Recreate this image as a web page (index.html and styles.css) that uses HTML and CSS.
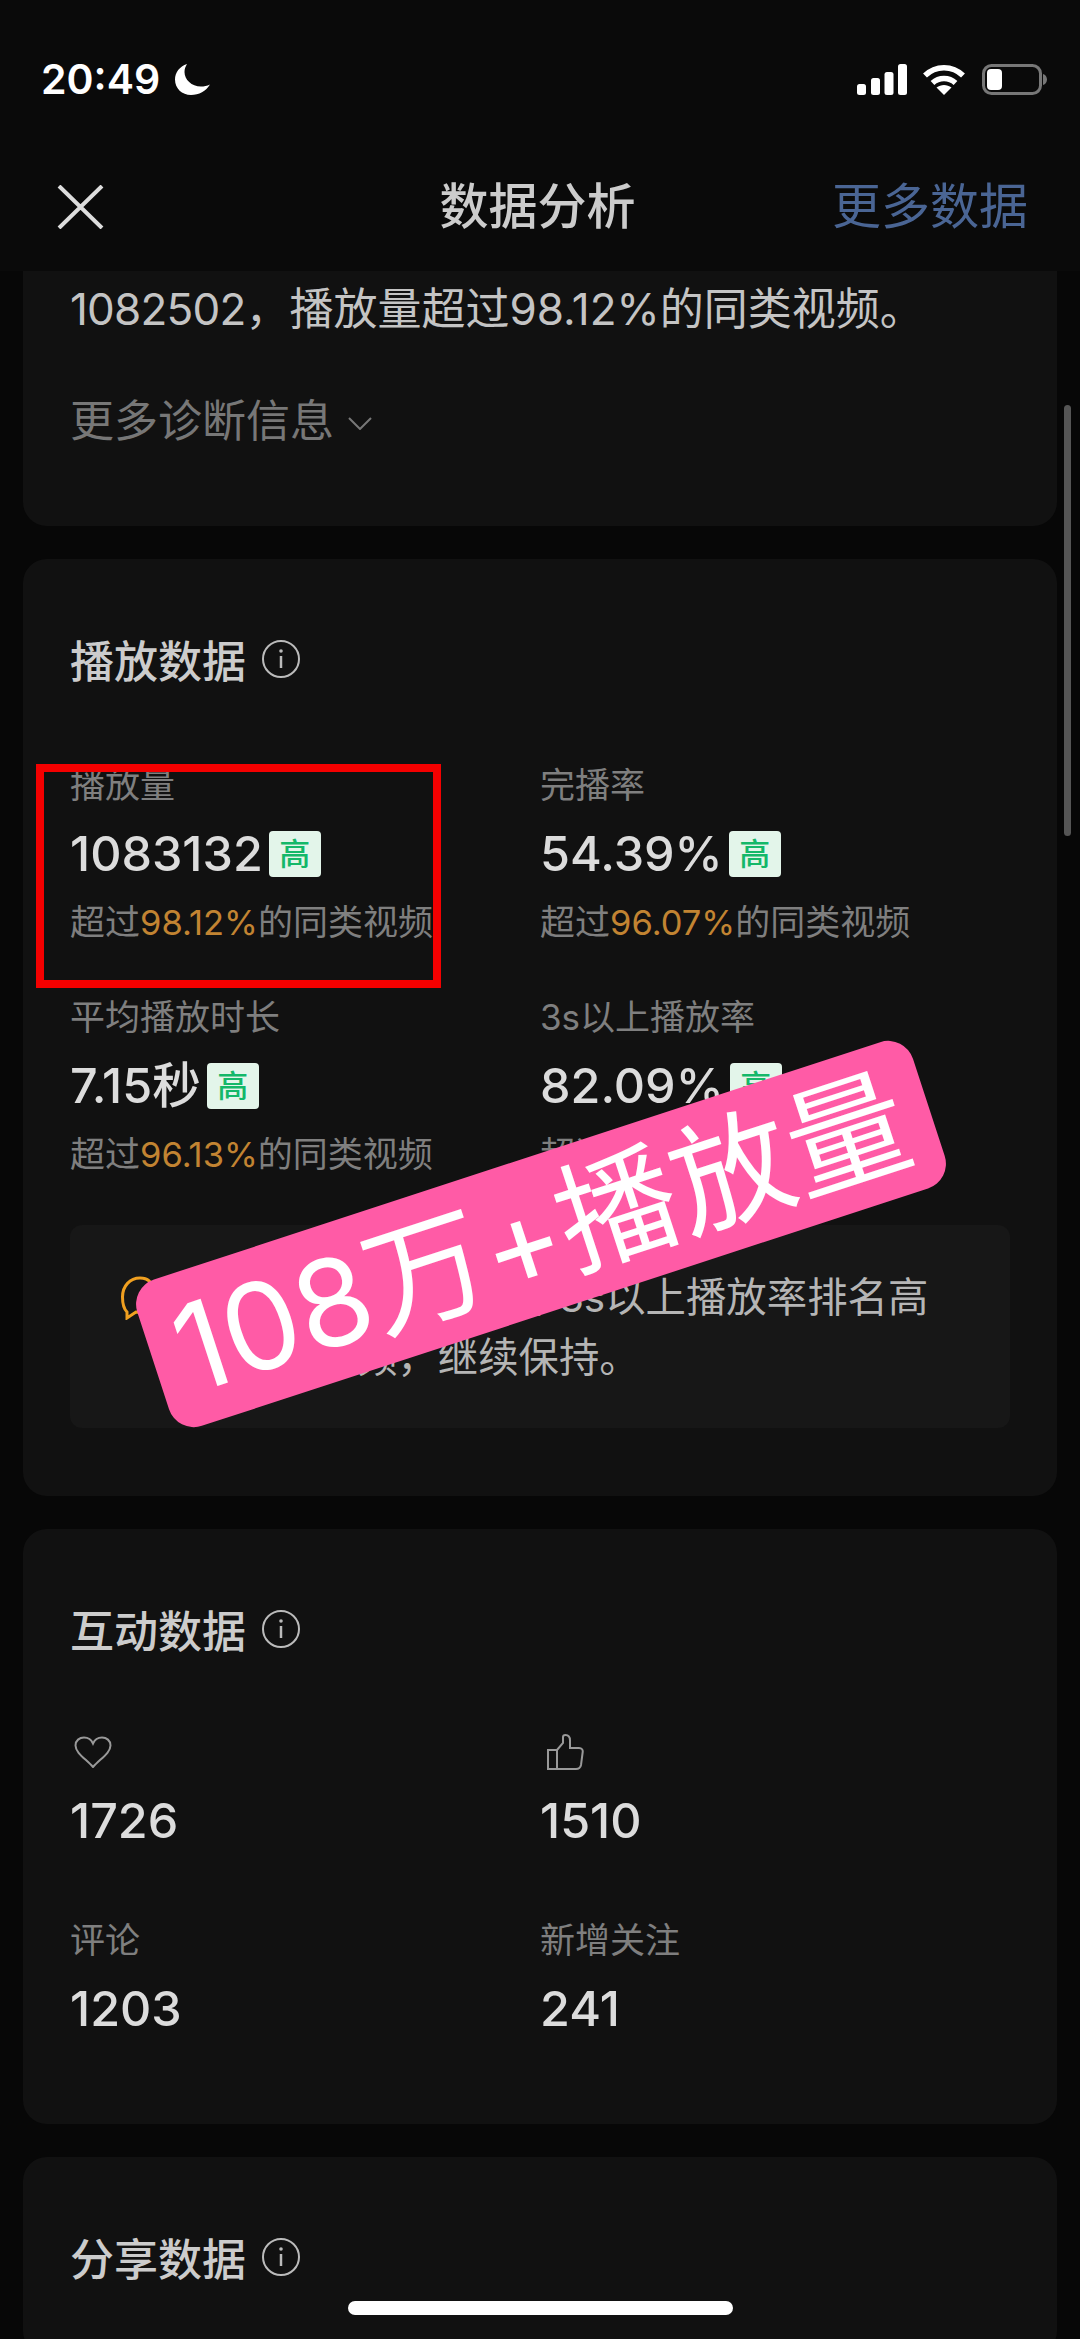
FILE: index.html
```html
<!DOCTYPE html>
<html lang="zh-CN">
  <head>
    <meta charset="UTF-8" />
    <meta name="viewport" content="width=device-width, initial-scale=1.0" />
    <title>数据分析</title>
    <link rel="stylesheet" href="styles.css">
  </head>
  <body>
    <div class="page">
      <header class="top">
        <div class="status">
          <div class="status-left">
            <span class="time">20:49</span>
            <svg class="moon" viewBox="0 0 35 31"><path d="M12 0C4.500 2.500 0 8.500 0 15.500 0 24.500 7 31 16 31c8 0 15-4 19-10.500C32 22 29 22.500 26 22.500 16.500 22.500 9.500 15.500 9.500 8 9.500 5 10.500 2.500 12 0Z" fill="#fff"/></svg>
          </div>
          <div class="status-right">
            <svg class="signal" viewBox="0 0 50 31" fill="#fff">
              <rect x="0" y="20" width="9" height="11" rx="2.500"/>
              <rect x="14" y="14" width="9" height="17" rx="2.500"/>
              <rect x="27.500" y="8" width="9" height="23" rx="2.500"/>
              <rect x="41" y="0" width="9" height="31" rx="2.500"/>
            </svg>
            <svg class="wifi" viewBox="0 0 44 31">
              <path d="M3 11.500C13.500 1 30.500 1 41 11.500" fill="none" stroke="#fff" stroke-width="5.500"/>
              <path d="M10.500 19C17 13 27 13 33.500 19" fill="none" stroke="#fff" stroke-width="5.500"/>
              <path d="M22 31 14.500 23.500C19 20 25 20 29.500 23.500Z" fill="#fff"/>
            </svg>
            <svg class="battery" viewBox="0 0 65 31">
              <rect x="1.500" y="1.500" width="57" height="28" rx="8" fill="none" stroke="#777" stroke-width="3"/>
              <rect x="5" y="5" width="15" height="21" rx="4" fill="#fff"/>
              <path d="M61 10c2.500.8 4 3 4 5.500s-1.500 4.700-4 5.500Z" fill="#777"/>
            </svg>
          </div>
        </div>
        <nav class="nav">
          <svg class="close" viewBox="0 0 66 44"><path d="M12 1 55 43M55 1 12 43" fill="none" stroke="#ddd" stroke-width="4"/></svg>
          <h1 class="nav-title">数据分析</h1>
          <a class="nav-more">更多数据</a>
        </nav>
      </header>

      <main class="list">
        <section class="card card-summary">
          <p class="summary-text"><span class="summary-num">1082502</span>，播放量超过98.12%的同类视频。</p>
          <div class="summary-more">
            <span>更多诊断信息</span>
            <svg class="chevron" viewBox="0 0 24 13"><path d="M1 1 12 12 23 1" fill="none" stroke="#777" stroke-width="2"/></svg>
          </div>
        </section>

        <section class="card">
          <h2 class="card-title">播放数据
            <svg class="info" viewBox="0 0 38 38"><circle cx="19" cy="19" r="18" fill="none" stroke="#bbb" stroke-width="2"/><circle cx="19" cy="11" r="1.800" fill="#bbb"/><path d="M19 16V28" stroke="#bbb" stroke-width="2.500"/></svg>
          </h2>
          <div class="metrics">
            <div class="metric">
              <div class="label">播放量</div>
              <div class="value">1083132<span class="tag">高</span></div>
              <div class="sub">超过<em>98.12%</em>的同类视频</div>
            </div>
            <div class="metric">
              <div class="label">完播率</div>
              <div class="value">54.39%<span class="tag">高</span></div>
              <div class="sub">超过<em>96.07%</em>的同类视频</div>
            </div>
            <div class="metric">
              <div class="label">平均播放时长</div>
              <div class="value">7.15秒<span class="tag">高</span></div>
              <div class="sub">超过<em>96.13%</em>的同类视频</div>
            </div>
            <div class="metric">
              <div class="label">3s以上播放率</div>
              <div class="value">82.09%<span class="tag">高</span></div>
              <div class="sub">超过<em>95.20%</em>的同类视频</div>
            </div>
          </div>
          <div class="callout">
            <svg class="callout-icon" viewBox="0 0 34 44"><path d="M6 36C2 32 1.500 27 1.500 21 1.500 10 9 2 19 2c9 0 14 6 14 18S26 37 15 36L6 42Z" fill="none" stroke="#f0a020" stroke-width="3"/></svg>
            <p class="callout-text">平均播放时长和完播率3s以上播放率排名高<br>于大部分视频，继续保持。</p>
          </div>
        </section>

        <section class="card card-social">
          <h2 class="card-title">互动数据
            <svg class="info" viewBox="0 0 38 38"><circle cx="19" cy="19" r="18" fill="none" stroke="#bbb" stroke-width="2"/><circle cx="19" cy="11" r="1.800" fill="#bbb"/><path d="M19 16V28" stroke="#bbb" stroke-width="2.500"/></svg>
          </h2>
          <div class="metrics metrics-social">
            <div class="metric">
              <div class="label">
                <svg class="heart" viewBox="0 0 38 32"><path d="M19 31C12 23 1.500 17 1.500 9.500 1.500 4.500 5.500 1.500 10 1.500c4 0 7.500 2.500 9 6 1.500-3.500 5-6 9-6 4.500 0 8.500 3 8.500 8C36.500 17 26 23 19 31Z" fill="none" stroke="#999" stroke-width="2"/></svg>
              </div>
              <div class="value">1726</div>
            </div>
            <div class="metric">
              <div class="label">
                <svg class="thumb" viewBox="0 0 37 36"><path d="M10 16 16 9V3C16 1.500 17 1 18.500 1 21.500 1 23 3.500 23 6.500V14H32C35 14 36 16 35.700 18L34 31C33.500 33.500 32 35 29 35H1V16H10M10 16V35" fill="none" stroke="#999" stroke-width="2"/></svg>
              </div>
              <div class="value">1510</div>
            </div>
            <div class="metric">
              <div class="label">评论</div>
              <div class="value">1203</div>
            </div>
            <div class="metric">
              <div class="label">新增关注</div>
              <div class="value">241</div>
            </div>
          </div>
        </section>

        <section class="card">
          <h2 class="card-title">分享数据
            <svg class="info" viewBox="0 0 38 38"><circle cx="19" cy="19" r="18" fill="none" stroke="#bbb" stroke-width="2"/><circle cx="19" cy="11" r="1.800" fill="#bbb"/><path d="M19 16V28" stroke="#bbb" stroke-width="2.500"/></svg>
          </h2>
        </section>
      </main>

      <!-- things drawn on top of the screenshot -->
      <div class="scrollbar"></div>
      <div class="red-box"></div>
      <div class="sticker">108万+播放量</div>
      <div class="home-bar"></div>
    </div>
  </body>
</html>
```

FILE: styles.css
```css
* {
  margin: 0;
  padding: 0;
  box-sizing: border-box;
}
body {
  background: #070707;
  font-family: "Inter", "Noto Sans CJK SC", sans-serif;
}
.page {
  position: relative;
  width: 1080px;
  height: 2339px;
  overflow: hidden;
  background: #070707;
}

/* top */
.top {
  height: 271px;
  padding-top: 49px;
  background: #0a0a0a;
}
.status {
  height: 60px;
  padding: 0 33px 0 41px;
  display: flex;
  justify-content: space-between;
  align-items: center;
}
.status-left {
  display: flex;
  align-items: center;
  gap: 15px;
}
.time {
  color: #fff;
  font-size: 41px;
  font-weight: 600;
}
.moon {
  width: 35px;
  height: 31px;
}
.status-right {
  display: flex;
  align-items: center;
}
.signal {
  width: 50px;
  height: 31px;
}
.wifi {
  width: 44px;
  height: 31px;
  margin-left: 15px;
}
.battery {
  width: 65px;
  height: 31px;
  margin-left: 16px;
}
.nav {
  height: 128px;
  margin-top: 34px;
  padding: 0 52px 0 47px;
  display: grid;
  grid-template-columns: 1fr auto 1fr;
  align-items: center;
}
.close {
  width: 66px;
  height: 44px;
}
.nav-title {
  color: #ccc;
  font-size: 49px;
  font-weight: 500;
  line-height: 68px;
}
.nav-more {
  color: #4a6594;
  font-size: 49px;
  line-height: 68px;
  text-align: right;
}

/* cards */
.list {
  padding: 0 23px;
  display: flex;
  flex-direction: column;
  gap: 33px;
}
.card {
  padding: 70px 47px 68px;
  background: #111;
  border-radius: 24px;
}
.card-summary {
  height: 255px;
  padding-top: 0;
  border-radius: 0 0 24px 24px;
}
.summary-text {
  color: #c4c4c4;
  font-size: 44px;
  line-height: 76px;
  white-space: nowrap;
}
.summary-num {
  letter-spacing: -0.8px;
}
.summary-more {
  margin-top: 36px;
  display: flex;
  align-items: center;
  gap: 14px;
  color: #777;
  font-size: 44px;
  line-height: 76px;
}
.chevron {
  width: 24px;
  height: 13px;
  margin-top: 4px;
}
.card-title {
  height: 60px;
  display: flex;
  align-items: center;
  gap: 16px;
  color: #ccc;
  font-size: 44px;
  font-weight: 500;
}
.info {
  width: 38px;
  height: 38px;
}

/* metric grid */
.metrics {
  margin-top: 74px;
  display: grid;
  grid-template-columns: 470px 1fr;
  row-gap: 51px;
}
.metrics-social {
  margin-top: 71px;
  row-gap: 67px;
}
.label {
  height: 44px;
  color: #7f7f7f;
  font-size: 35px;
  line-height: 44px;
}
.value {
  margin-top: 17px;
  height: 60px;
  display: flex;
  align-items: center;
  color: #dcdcdc;
  font-size: 48.5px;
  font-weight: 450;
  line-height: 60px;
}
.tag {
  width: 52px;
  height: 46px;
  margin-left: 6px;
  display: flex;
  justify-content: center;
  align-items: center;
  background: #e3f5ea;
  border-radius: 4px;
  color: #14b869;
  font-size: 31px;
  font-weight: 500;
}
.sub {
  height: 44px;
  margin-top: 16px;
  color: #7f7f7f;
  font-size: 35px;
  line-height: 44px;
  white-space: nowrap;
}
.sub em {
  color: #c28432;
  font-size: 34.5px;
  font-style: normal;
}
.heart {
  width: 38px;
  height: 32px;
  margin: 6px 0 0 4px;
}
.thumb {
  width: 37px;
  height: 36px;
  margin: 4px 0 0 7px;
}
.card-social {
  padding-bottom: 85px;
}

/* tip box */
.callout {
  height: 203px;
  margin-top: 49px;
  padding: 43px 0 0 51px;
  display: flex;
  background: #171717;
  border-radius: 12px;
}
.callout-icon {
  width: 34px;
  height: 44px;
  margin-top: 8px;
}
.callout-text {
  color: #b5b5b5;
  font-size: 40.4px;
  line-height: 60px;
  white-space: nowrap;
}

/* overlays */
.scrollbar {
  position: absolute;
  left: 1064px;
  top: 405px;
  width: 7px;
  height: 431px;
  background: #555;
  border-radius: 4px;
}
.red-box {
  position: absolute;
  left: 36px;
  top: 764px;
  width: 405px;
  height: 224px;
  border: 8px solid #f40000;
}
.sticker {
  position: absolute;
  left: 133px;
  top: 1157px;
  width: 816px;
  height: 154px;
  display: flex;
  justify-content: center;
  align-items: center;
  background: #ff5ba6;
  border-radius: 26px;
  color: #fff;
  font-size: 121px;
  font-weight: 400;
  line-height: 154px;
  white-space: nowrap;
  transform: rotate(-18.1deg);
}
.home-bar {
  position: absolute;
  left: 348px;
  top: 2301px;
  width: 385px;
  height: 14px;
  background: #fff;
  border-radius: 7px;
}
```
